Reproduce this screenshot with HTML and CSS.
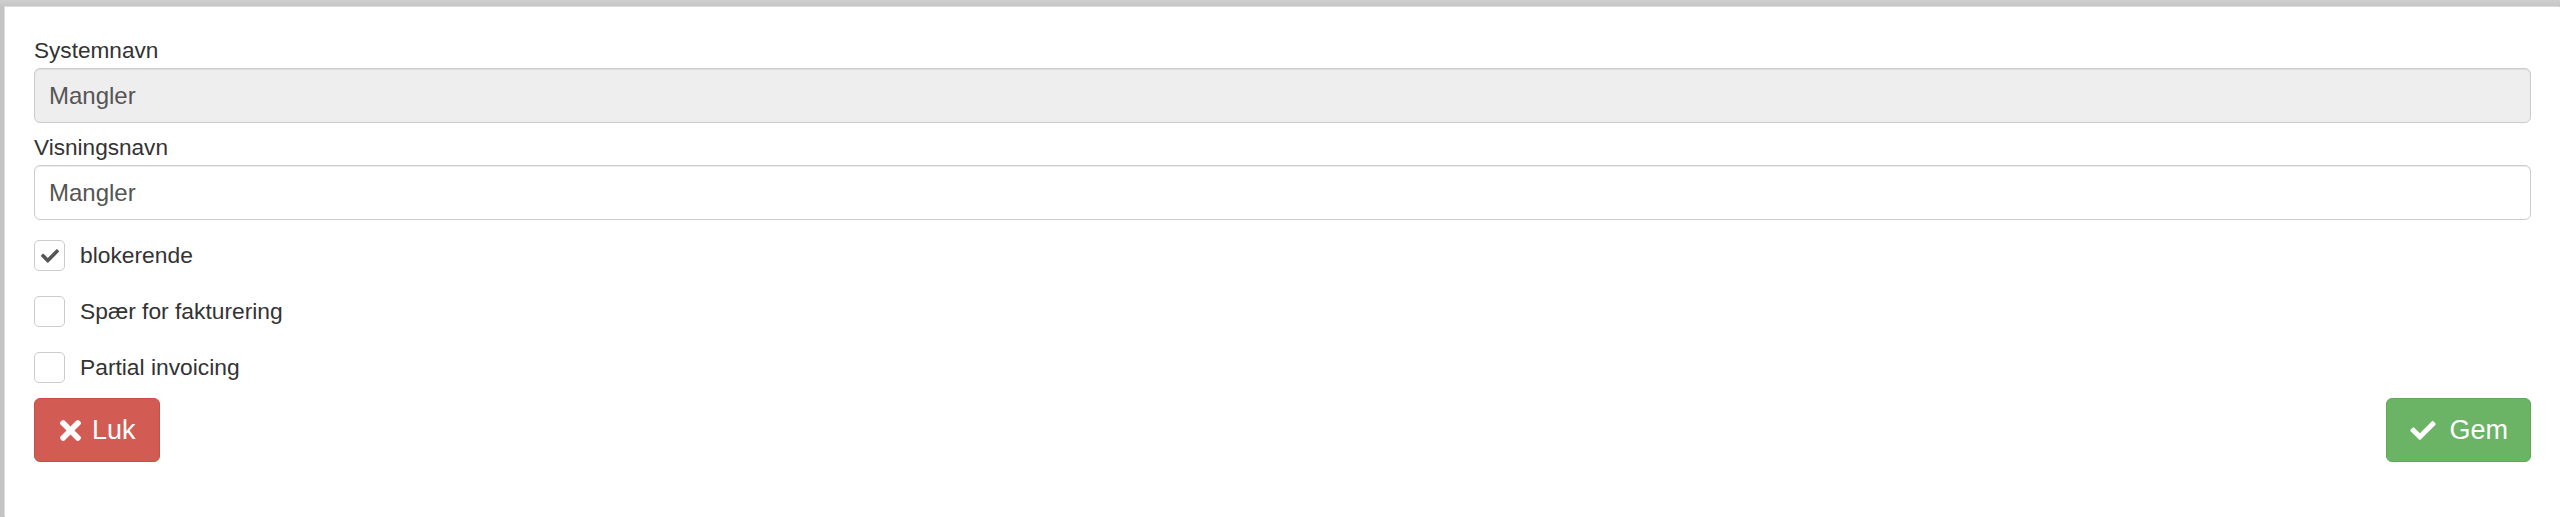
FILE: index.html
```html
<!DOCTYPE html>
<html lang=da>
	<head>
		<meta charset="utf-8">
		<meta name="viewport" content="width=device-width, initial-scale=1.0">
		<title>Rediger status</title>
		<link rel="stylesheet" href="styles.css">
	</head>
	<body>
		<div class="modal">
			<form class="edit-form">
				<div class="field">
					<label class="field-label" for="systemName">Systemnavn</label>
					<input class="field-input" id="systemName" type="text" value="Mangler" disabled>
				</div>
				<div class="field">
					<label class="field-label" for="displayName">Visningsnavn</label>
					<input class="field-input" id="displayName" type="text" value="Mangler">
				</div>
				<div class="checks">
					<label class="check">
						<span class="check-box">
							<svg class="check-mark" viewBox="0 64 512 384"><path d="M173.9 439.4l-166.4-166.4c-10-10-10-26.2 0-36.2l36.2-36.2c10-10 26.2-10 36.2 0L192 312.7 432.1 72.6c10-10 26.2-10 36.2 0l36.2 36.2c10 10 10 26.2 0 36.2l-294.4 294.4c-10 10-26.2 10-36.2 0z"/></svg>
						</span>
						blokerende
					</label>
					<label class="check">
						<span class="check-box"></span>
						Spær for fakturering
					</label>
					<label class="check">
						<span class="check-box"></span>
						Partial invoicing
					</label>
				</div>
				<div class="actions">
					<button class="btn btn-danger" type="button">
						<svg class="btn-icon icon-times" viewBox="0 80 352 352"><path d="M242.7 256l100.1-100.1c12.3-12.3 12.3-32.2 0-44.5l-22.2-22.2c-12.3-12.3-32.2-12.3-44.5 0L176 189.3 75.9 89.2c-12.3-12.3-32.2-12.3-44.5 0L9.2 111.4c-12.3 12.3-12.3 32.2 0 44.5L109.3 256 9.2 356.1c-12.3 12.3-12.3 32.2 0 44.5l22.2 22.2c12.3 12.3 32.2 12.3 44.5 0L176 322.7l100.1 100.1c12.3 12.3 32.2 12.3 44.5 0l22.2-22.2c12.3-12.3 12.3-32.2 0-44.5L242.7 256z"/></svg>
						Luk
					</button>
					<button class="btn btn-success" type="submit">
						<svg class="btn-icon icon-check" viewBox="0 64 512 384"><path d="M173.9 439.4l-166.4-166.4c-10-10-10-26.2 0-36.2l36.2-36.2c10-10 26.2-10 36.2 0L192 312.7 432.1 72.6c10-10 26.2-10 36.2 0l36.2 36.2c10 10 10 26.2 0 36.2l-294.4 294.4c-10 10-26.2 10-36.2 0z"/></svg>
						Gem
					</button>
				</div>
			</form>
		</div>
	</body>
</html>
```

FILE: styles.css
```css
html, body {
	height: 100%;
}

body {
	margin: 0;
	background: linear-gradient(#cfcfcf, #c4c4c4 7px);
	font-family: 'Liberation Sans', 'Helvetica Neue', Arial, sans-serif;
	color: #333;
}

.modal {
	box-sizing: border-box;
	margin: 7px 0 0 5px;
	min-height: calc(100% - 7px);
	padding: 28px 29px 0;
	background: #fff;
	box-shadow: -1px -1px 0 #dcdcdc;
}

.edit-form {
	display: flex;
	flex-direction: column;
}

.field {
	display: flex;
	flex-direction: column;
	margin-bottom: 9px;
}

.field-label {
	font-size: 22.6px;
	line-height: 32px;
	margin-bottom: 1px;
}

.field-input {
	box-sizing: border-box;
	height: 55px;
	padding: 0 14px;
	border: 1px solid #ccc;
	border-radius: 6px;
	background: #fff;
	font-family: inherit;
	font-size: 24px;
	color: #555;
	box-shadow: inset 0 1px 1px rgba(0, 0, 0, .075);
	outline: none;
}

.field-input:disabled {
	background: #eee;
	color: #555;
	-webkit-text-fill-color: #555;
	opacity: 1;
}

.checks {
	display: flex;
	flex-direction: column;
	gap: 25px;
	margin-top: 11px;
}

.check {
	display: flex;
	align-items: center;
	gap: 15px;
	height: 31px;
	font-size: 22.8px;
}

.check-box {
	box-sizing: border-box;
	display: flex;
	align-items: center;
	justify-content: center;
	width: 31px;
	height: 31px;
	border: 1px solid #ccc;
	border-radius: 5px;
	background: #fff;
}

.check-mark {
	width: 18px;
	height: 14px;
	fill: #555;
}

.actions {
	display: flex;
	justify-content: space-between;
	margin-top: 15px;
}

.btn {
	box-sizing: border-box;
	display: inline-flex;
	align-items: center;
	height: 64px;
	padding: 0 23px 0 25px;
	border: 1px solid transparent;
	border-radius: 6px;
	font-family: inherit;
	font-size: 27px;
	color: #fff;
	cursor: pointer;
}

.btn-icon {
	fill: #fff;
}

.btn-danger {
	background: #d25c53;
	border-color: #ca4e45;
}

.btn-success {
	padding: 0 22px 0 23px;
	background: #6bb365;
	border-color: #5fa859;
}

.icon-times {
	width: 21px;
	height: 21px;
	margin-right: 11px;
}

.icon-check {
	width: 26px;
	height: 19px;
	margin-right: 13px;
}
```
